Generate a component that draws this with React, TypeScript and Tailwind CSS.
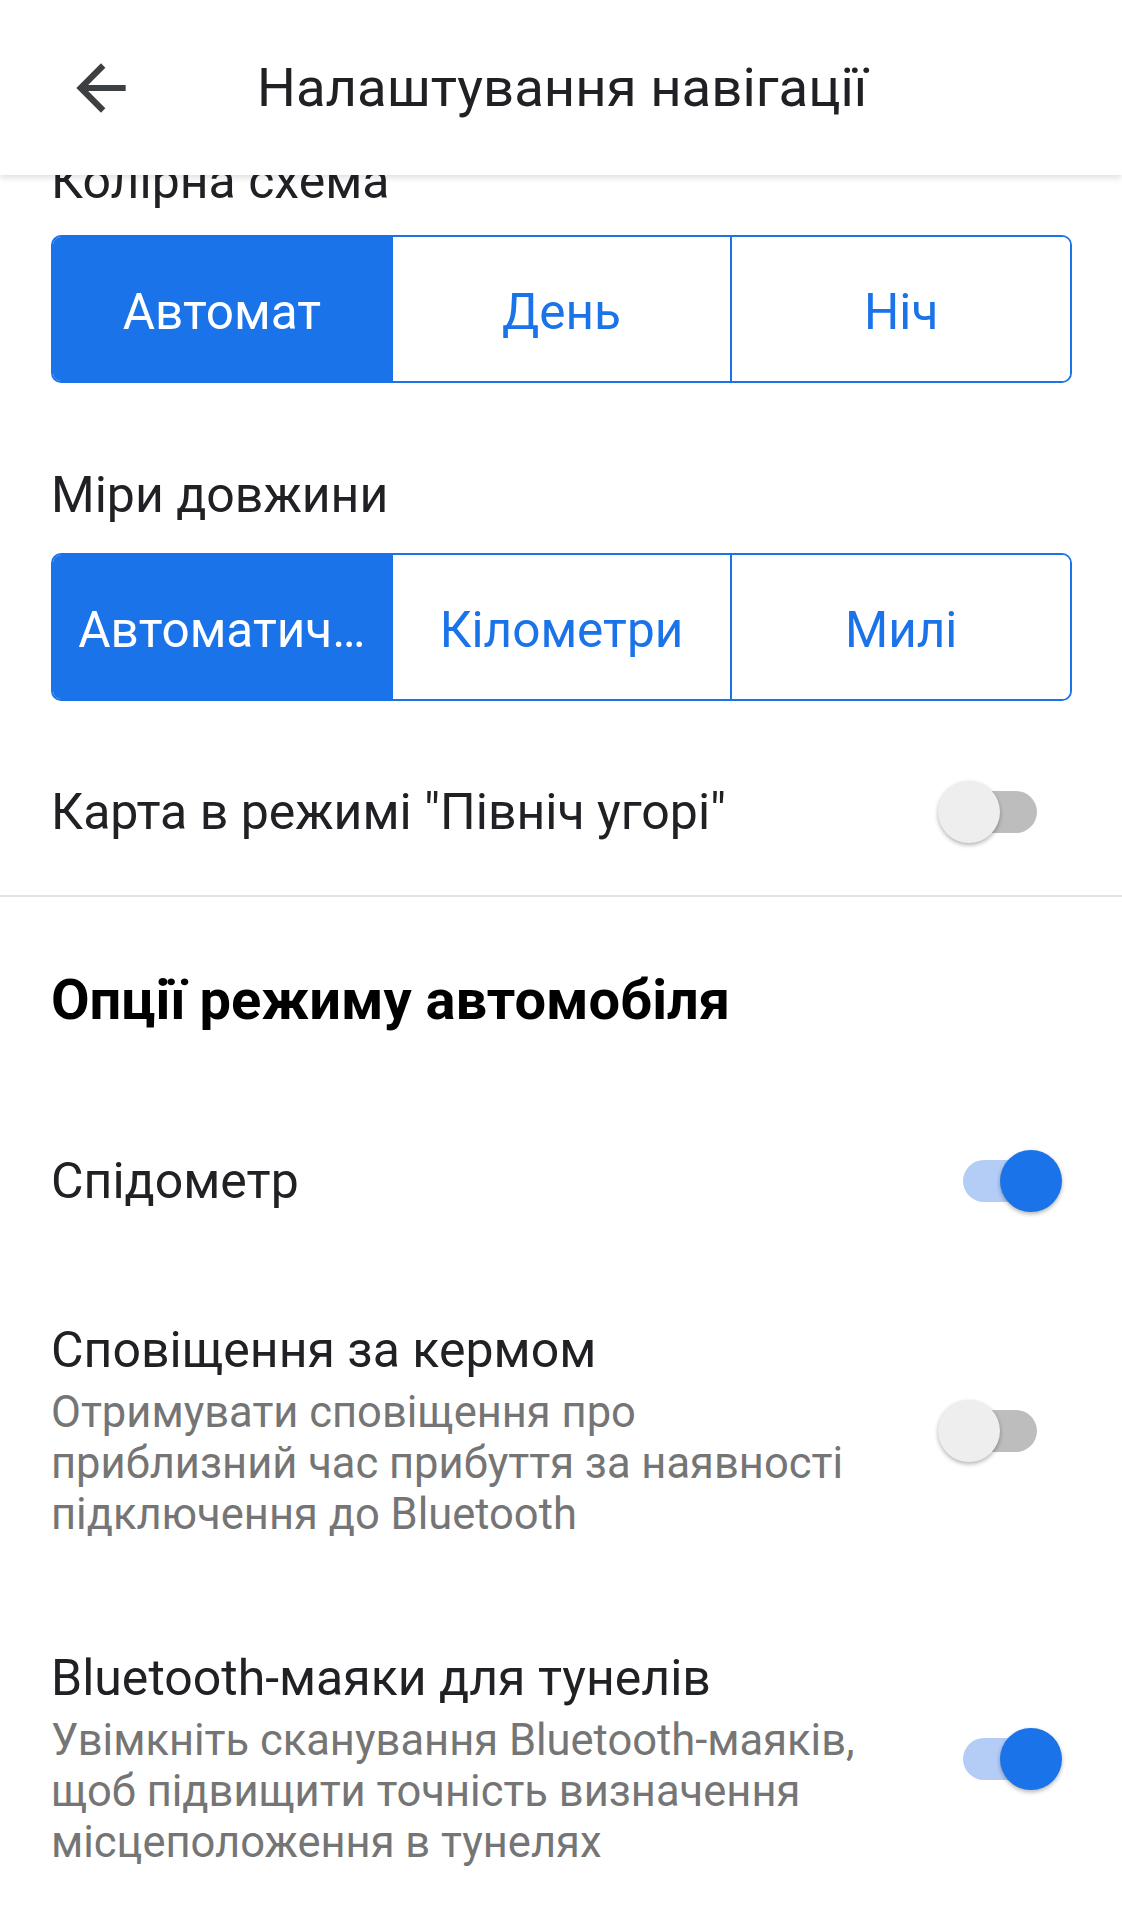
import React from "react";

function BackArrow() {
  return (
    <svg viewBox="0 0 24 24" className="h-[74px] w-[74px] fill-[#3c4043]">
      <path d="M20 11H7.83l5.59-5.59L12 4l-8 8 8 8 1.41-1.41L7.83 13H20v-2z" />
    </svg>
  );
}

function Toggle({ on }: { on: boolean }) {
  return (
    <div className="relative mr-[10px] h-[62px] w-[124px] shrink-0">
      <div
        className={
          on
            ? "absolute left-[25px] top-[10px] h-[42px] w-[74px] rounded-full bg-[#b3cdf6]"
            : "absolute left-[25px] top-[10px] h-[42px] w-[74px] rounded-full bg-[#bdbdbd]"
        }
      />
      <div
        className={
          on
            ? "absolute right-0 top-0 h-[62px] w-[62px] rounded-full bg-[#1a73e8] shadow-[0_2px_4px_rgba(0,0,0,0.3)]"
            : "absolute left-0 top-0 h-[62px] w-[62px] rounded-full bg-[#eeeeee] shadow-[0_2px_4px_rgba(0,0,0,0.3)]"
        }
      />
    </div>
  );
}

function Segmented({ options, selected }: { options: string[]; selected: number }) {
  return (
    <div className="flex h-[148px] overflow-hidden rounded-[10px] border-2 border-[#1a73e8]">
      {options.map((o, i) => (
        <div
          key={o}
          className={
            (i === selected
              ? "bg-[#1a73e8] text-white"
              : "bg-white text-[#1a73e8]") +
            (i > 0 ? " border-l-2 border-[#1a73e8]" : "") +
            " flex flex-1 items-center justify-center pt-[7px] text-[49.5px] leading-none whitespace-nowrap"
          }
        >
          {o}
        </div>
      ))}
    </div>
  );
}

function ToggleRow({
  title,
  subtitle,
  on,
  className = "",
}: {
  title: string;
  subtitle?: string[];
  on: boolean;
  className?: string;
}) {
  return (
    <div className={`flex items-center justify-between ${className}`.trim()}>
      <div>
        <div className="text-[50px] leading-[58px] text-[#202124]">{title}</div>
        {subtitle ? (
          <div className="mt-[8px] text-[43.5px] leading-[51px] text-[#757575]">
            {subtitle.map((l) => (
              <div key={l}>{l}</div>
            ))}
          </div>
        ) : null}
      </div>
      <Toggle on={on} />
    </div>
  );
}

export default function App() {
  return (
    <div className="min-h-[1920px] bg-white font-[Roboto,'Noto_Sans',sans-serif]">
      <header className="relative z-10 flex h-[175px] items-center bg-white pl-[64px] shadow-[0_3px_6px_rgba(0,0,0,0.12)]">
        <BackArrow />
        <h1 className="ml-[119px] text-[54.5px] font-normal leading-none text-[#202124]">
          Налаштування навігації
        </h1>
      </header>

      <main className="-mt-[23px]">
        <section className="pl-[51px] pr-[50px]">
          <div className="text-[50px] leading-[58px] text-[#202124]">Колірна схема</div>
          <div className="mt-[25px]">
            <Segmented options={["Автомат", "День", "Ніч"]} selected={0} />
          </div>
          <div className="mt-[83px] text-[50px] leading-[58px] text-[#202124]">Міри довжини</div>
          <div className="mt-[29px]">
            <Segmented options={["Автоматич…", "Кілометри", "Милі"]} selected={0} />
          </div>
          <div className="flex h-[194px] items-center justify-between pt-[28px]">
            <div className="text-[50px] leading-[58px] text-[#202124]">
              Карта в режимі "Північ угорі"
            </div>
            <Toggle on={false} />
          </div>
        </section>

        <div className="h-[2px] bg-[#e3e3e3]" />

        <section className="pl-[51px] pr-[50px]">
          <h2 className="mt-[73px] text-[56px] font-bold leading-[60px] text-[#000000]">
            Опції режиму автомобіля
          </h2>
          <ToggleRow className="mt-[111px] h-[80px]" title="Спідометр" on />
          <ToggleRow
            className="mt-[100px]"
            title="Сповіщення за кермом"
            subtitle={[
              "Отримувати сповіщення про",
              "приблизний час прибуття за наявності",
              "підключення до Bluetooth",
            ]}
            on={false}
          />
          <ToggleRow
            className="mt-[109px]"
            title="Bluetooth-маяки для тунелів"
            subtitle={[
              "Увімкніть сканування Bluetooth-маяків,",
              "щоб підвищити точність визначення",
              "місцеположення в тунелях",
            ]}
            on
          />
        </section>
      </main>
    </div>
  );
}
